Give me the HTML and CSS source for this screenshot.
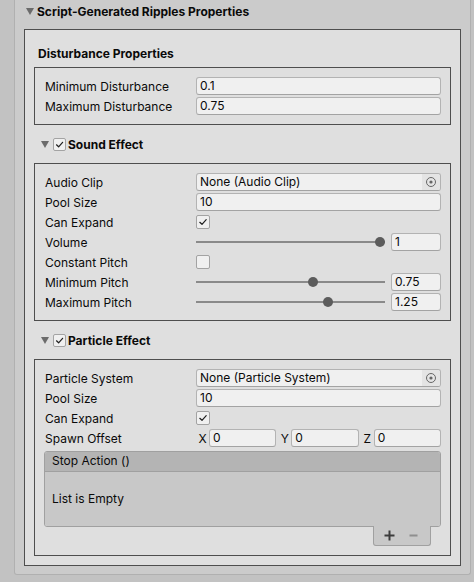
FILE: index.html
```html
<!DOCTYPE html>
<html>
<head>
<meta charset="utf-8">
<link rel="stylesheet" href="styles.css">
</head>
<body>
<div class="panel">
  <div class="title"><span class="tri"></span><span>Script-Generated Ripples Properties</span></div>
  <div class="outer">
    <div class="heading">Disturbance Properties</div>
    <div class="box">
      <div class="row"><span class="label">Minimum Disturbance</span><div class="field">0.1</div></div>
      <div class="row"><span class="label">Maximum Disturbance</span><div class="field">0.75</div></div>
    </div>

    <div class="section"><span class="tri"></span><span class="hcheck"><svg viewBox="0 0 13 13" width="13" height="13"><polyline points="3.5,6.8 5.6,8.8 9.6,4.3" /></svg></span><span>Sound Effect</span></div>
    <div class="box">
      <div class="row"><span class="label">Audio Clip</span><div class="field obj"><span class="objtext">None (Audio Clip)</span><span class="picker"><svg viewBox="0 0 12 12" width="12" height="12"><circle cx="6" cy="6" r="4.5" class="ring"/><circle cx="6" cy="6" r="1.6" class="dot"/></svg></span></div></div>
      <div class="row"><span class="label">Pool Size</span><div class="field">10</div></div>
      <div class="row"><span class="label">Can Expand</span><span class="check"><svg viewBox="0 0 14 14" width="14" height="14"><polyline points="3.8,7.3 6,9.3 10.2,4.7" /></svg></span></div>
      <div class="row"><span class="label">Volume</span><div class="slider"><div class="track"><span class="knob" style="--v:1"></span></div><div class="field num">1</div></div></div>
      <div class="row"><span class="label">Constant Pitch</span><span class="check"></span></div>
      <div class="row"><span class="label">Minimum Pitch</span><div class="slider"><div class="track"><span class="knob" style="--v:0.625"></span></div><div class="field num">0.75</div></div></div>
      <div class="row"><span class="label">Maximum Pitch</span><div class="slider"><div class="track"><span class="knob" style="--v:0.7083"></span></div><div class="field num">1.25</div></div></div>
    </div>

    <div class="section"><span class="tri"></span><span class="hcheck"><svg viewBox="0 0 13 13" width="13" height="13"><polyline points="3.5,6.8 5.6,8.8 9.6,4.3" /></svg></span><span>Particle Effect</span></div>
    <div class="box">
      <div class="row"><span class="label">Particle System</span><div class="field obj"><span class="objtext">None (Particle System)</span><span class="picker"><svg viewBox="0 0 12 12" width="12" height="12"><circle cx="6" cy="6" r="4.5" class="ring"/><circle cx="6" cy="6" r="1.6" class="dot"/></svg></span></div></div>
      <div class="row"><span class="label">Pool Size</span><div class="field">10</div></div>
      <div class="row"><span class="label">Can Expand</span><span class="check"><svg viewBox="0 0 14 14" width="14" height="14"><polyline points="3.8,7.3 6,9.3 10.2,4.7" /></svg></span></div>
      <div class="row"><span class="label">Spawn Offset</span>
        <div class="vec">
          <div class="comp"><span class="axis">X</span><div class="field">0</div></div>
          <div class="comp"><span class="axis">Y</span><div class="field">0</div></div>
          <div class="comp"><span class="axis">Z</span><div class="field">0</div></div>
        </div>
      </div>
      <div class="list">
        <div class="list-head">Stop Action ()</div>
        <div class="list-body">List is Empty</div>
      </div>
      <div class="list-foot">
        <svg class="plus" viewBox="0 0 11 11" width="11" height="11"><path d="M5.5 0.5v10M0.5 5.5h10"/></svg>
        <svg class="minus" viewBox="0 0 9 11" width="9" height="11"><path d="M0.5 5.5h8"/></svg>
      </div>
    </div>
  </div>
</div>
</body>
</html>
```
FILE: styles.css
```css
* { box-sizing: border-box; }
html, body { margin: 0; }
body {
  background: #c2c2c2;
  font-family: Inter, "Noto Sans", sans-serif;
  font-size: 12px;
  color: #0a0a0a;
  width: 474px;
  height: 582px;
  overflow: hidden;
}
.panel {
  margin-left: 14px;
  width: 457px;
  background: #cbcbcb;
  border: 1px solid #b0b0b0;
  border-top: none;
  border-radius: 0 0 3px 3px;
  padding: 0 9px 8px;
}
.title {
  height: 22px;
  margin-bottom: 7px;
  display: flex;
  align-items: center;
  gap: 3px;
  padding-left: 2px;
  font-weight: 700;
}
.tri {
  width: 0;
  height: 0;
  border-left: 4px solid transparent;
  border-right: 4px solid transparent;
  border-top: 7px solid #6b6b6b;
  flex: none;
}
.outer {
  border: 1px solid #4e4e4e;
  background: #dfdfdf;
  padding: 0 9px 9px;
}
.heading {
  padding-top: 16px;
  height: 32px;
  line-height: 16px;
  margin-bottom: 5px;
  padding-left: 4px;
  font-weight: 700;
}
.box {
  border: 1px solid #4e4e4e;
  padding: 9px 9px 9px 10px;
  display: flex;
  flex-direction: column;
  gap: 2px;
}
.section {
  height: 38px;
  display: flex;
  align-items: center;
  padding-left: 7px;
  font-weight: 700;
}
.section .tri { margin-right: 4px; }
.hcheck {
  width: 13px;
  height: 13px;
  border: 1px solid #a3a3a3;
  border-radius: 2px;
  background: #f0f0f0;
  margin-right: 2px;
  position: relative;
  flex: none;
}
.hcheck svg { position: absolute; left: -1px; top: -1px; }
svg polyline { fill: none; stroke: #1e1e1e; stroke-width: 1.2; stroke-linecap: round; stroke-linejoin: round; }
.row {
  height: 18px;
  display: grid;
  grid-template-columns: 151px 1fr;
  align-items: center;
}
.label { white-space: nowrap; }
.field {
  height: 18px;
  background: #f0f0f0;
  border: 1px solid #b3b3b3;
  border-bottom-color: #a3a3a3;
  border-radius: 3px;
  padding-left: 3px;
  line-height: 16px;
  white-space: nowrap;
  overflow: hidden;
}
.obj { display: flex; padding-right: 0; }
.objtext { flex: 1; }
.picker {
  width: 18px;
  background: #e4e4e4;
  display: flex;
  align-items: center;
  justify-content: center;
}
.picker .ring { fill: none; stroke: #666; stroke-width: 1; }
.picker .dot { fill: #666; }
.check {
  width: 14px;
  height: 14px;
  border: 1px solid #a3a3a3;
  border-radius: 2px;
  background: #f0f0f0;
  position: relative;
}
.check svg { position: absolute; left: -1px; top: -1px; }
.slider {
  display: flex;
  align-items: center;
  gap: 6px;
  height: 18px;
}
.track {
  flex: 1;
  height: 2px;
  background: #8a8a8a;
  position: relative;
}
.knob {
  position: absolute;
  top: -4px;
  left: calc(var(--v) * (100% - 10px));
  width: 10px;
  height: 10px;
  border-radius: 50%;
  background: #5c5c5c;
}
.num { width: 50px; flex: none; }
.vec {
  display: flex;
  gap: 2px;
}
.comp {
  flex: 1;
  display: flex;
  align-items: center;
}
.axis { width: 13px; text-align: center; flex: none; }
.comp .field { flex: 1; }
.list {
  margin-top: 2px;
  margin-left: -1px;
  border: 1px solid #a0a0a0;
  border-radius: 3px;
  overflow: hidden;
}
.list-head {
  height: 20px;
  background: #b4b4b4;
  border-bottom: 1px solid #a0a0a0;
  padding-left: 7px;
  line-height: 18px;
}
.list-body {
  height: 54px;
  background: #c8c8c8;
  padding-left: 7px;
  line-height: 54px;
}
.list-foot {
  align-self: flex-end;
  margin-right: 10px;
  margin-top: -3px;
  width: 58px;
  height: 20px;
  background: #c8c8c8;
  border: 1px solid #a0a0a0;
  border-top: none;
  border-radius: 0 0 3px 3px;
  display: flex;
  align-items: center;
  padding-left: 10px;
  gap: 14px;
}
.list-foot path { fill: none; stroke-width: 2; }
.plus path { stroke: #3c3c3c; }
.minus path { stroke: #8f8f8f; }
```
